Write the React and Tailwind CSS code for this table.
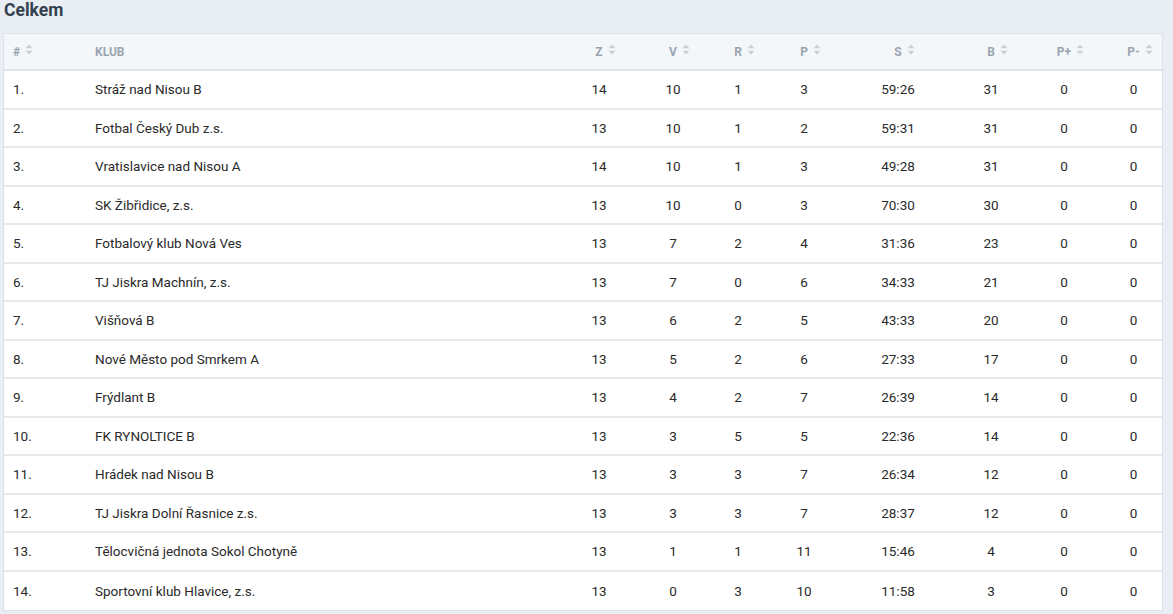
import React from 'react';

const rows = [
  ['1.', 'Stráž nad Nisou B', 14, 10, 1, 3, '59:26', 31, 0, 0],
  ['2.', 'Fotbal Český Dub z.s.', 13, 10, 1, 2, '59:31', 31, 0, 0],
  ['3.', 'Vratislavice nad Nisou A', 14, 10, 1, 3, '49:28', 31, 0, 0],
  ['4.', 'SK Žibřidice, z.s.', 13, 10, 0, 3, '70:30', 30, 0, 0],
  ['5.', 'Fotbalový klub Nová Ves', 13, 7, 2, 4, '31:36', 23, 0, 0],
  ['6.', 'TJ Jiskra Machnín, z.s.', 13, 7, 0, 6, '34:33', 21, 0, 0],
  ['7.', 'Višňová B', 13, 6, 2, 5, '43:33', 20, 0, 0],
  ['8.', 'Nové Město pod Smrkem A', 13, 5, 2, 6, '27:33', 17, 0, 0],
  ['9.', 'Frýdlant B', 13, 4, 2, 7, '26:39', 14, 0, 0],
  ['10.', 'FK RYNOLTICE B', 13, 3, 5, 5, '22:36', 14, 0, 0],
  ['11.', 'Hrádek nad Nisou B', 13, 3, 3, 7, '26:34', 12, 0, 0],
  ['12.', 'TJ Jiskra Dolní Řasnice z.s.', 13, 3, 3, 7, '28:37', 12, 0, 0],
  ['13.', 'Tělocvičná jednota Sokol Chotyně', 13, 1, 1, 11, '15:46', 4, 0, 0],
  ['14.', 'Sportovní klub Hlavice, z.s.', 13, 0, 3, 10, '11:58', 3, 0, 0],
];

const cols = 'grid grid-cols-[82px_476px_74px_74px_56px_76px_112px_74px_72px_1fr]';

const SortIcon = () => (
  <svg width="8" height="11" viewBox="0 0 8 11" className="ml-[5px] -translate-y-[2px] shrink-0">
    <path d="M4 0.5 L7.5 4.2 L0.5 4.2 Z" fill="#c9cfd6" />
    <path d="M4 10.5 L7.5 6.8 L0.5 6.8 Z" fill="#c9cfd6" />
  </svg>
);

const HeadCell = ({ label, sort = true, center = true, extra = '' }) => (
  <div className={`flex items-center ${center ? 'justify-center pl-[13px]' : 'pl-[9px]'} ${extra}`}>
    <span>{label}</span>
    {sort && <SortIcon />}
  </div>
);

export default function App() {
  return (
    <div className="min-h-[614px] w-[1173px] bg-[#e9eef4] font-['Roboto','Liberation_Sans',sans-serif]">
      <div className="h-[33px] pl-[4px]">
        <h2 className="text-[17.5px] leading-[20px] font-bold text-[#34414f]">Celkem</h2>
      </div>
      <div className="ml-[3px] w-[1160px] bg-white border border-[#dce2e9]">
        {/* hlavička */}
        <div className={`${cols} h-[37px] bg-[#f4f7fa] border-b-2 border-[#dfe4ea] text-[12px] font-bold uppercase text-[#9aa4b0]`}>
          <HeadCell label="#" center={false} />
          <HeadCell label="Klub" sort={false} center={false} />
          <HeadCell label="Z" />
          <HeadCell label="V" />
          <HeadCell label="R" />
          <HeadCell label="P" />
          <HeadCell label="S" />
          <HeadCell label="B" />
          <HeadCell label="P+" />
          <HeadCell label="P-" extra="pl-[18px]" />
        </div>
        {rows.map((r, i) => (
          <div
            key={r[0]}
            className={`${cols} h-[38.5px] text-[13.5px] text-[#2a2a2a] ${i < rows.length - 1 ? 'border-b-2 border-[#e6eaef]' : ''}`}
          >
            <div className="flex items-center pl-[9px]">{r[0]}</div>
            <div className="flex items-center pl-[9px]">{r[1]}</div>
            {r.slice(2).map((v, j) => (
              <div key={j} className={`flex items-center justify-center ${j === 7 ? 'pl-[5px]' : ''}`}>
                {v}
              </div>
            ))}
          </div>
        ))}
      </div>
    </div>
  );
}
